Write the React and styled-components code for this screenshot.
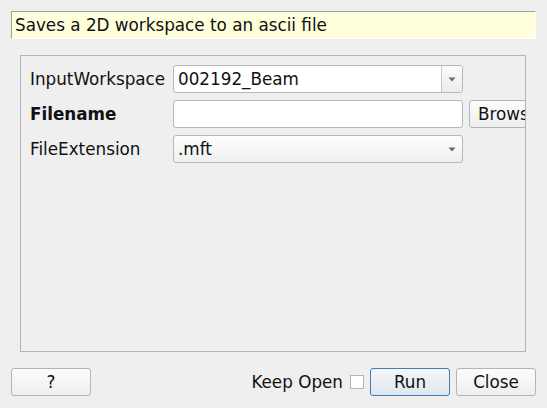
import React from 'react';
import styled, { createGlobalStyle } from 'styled-components';

const GlobalStyle = createGlobalStyle`
  html, body {
    margin: 0;
    padding: 0;
    background: #efefef;
  }
  body {
    font-family: "DejaVu Sans", "Liberation Sans", sans-serif;
    font-size: 16.8px;
    color: #111;
  }
`;

const Dialog = styled.div`
  width: 547px;
  height: 408px;
  box-sizing: border-box;
  padding: 11px 11px 0 11px;
  display: flex;
  flex-direction: column;
  background: #efefef;
`;

const Info = styled.div`
  height: 28px;
  box-sizing: border-box;
  background: #ffffdc;
  border-top: 1px solid #a0a0a0;
  border-left: 1px solid #a0a0a0;
  border-bottom: 1px solid #ffffff;
  border-right: 1px solid #ffffff;
  padding: 0 4px 0 3px;
  display: flex;
  align-items: center;
  white-space: nowrap;
`;

const Group = styled.div`
  margin: 16px 10px 0 9px;
  height: 297px;
  box-sizing: border-box;
  border: 1px solid #b4b4b4;
  padding: 9px 0 0 9px;
  overflow: hidden;
`;

const Form = styled.div`
  display: grid;
  grid-template-columns: 137px 290px 80px;
  column-gap: 6px;
  row-gap: 7px;
  align-items: center;
`;

const Label = styled.div`
  font-weight: ${({ $bold }) => ($bold ? 'bold' : 'normal')};
  white-space: nowrap;
`;

const Field = styled.div`
  height: 28px;
  box-sizing: border-box;
  border: 1px solid #b8b8b8;
  border-radius: 3px;
  background: ${({ $combo }) =>
    $combo ? 'linear-gradient(#fdfdfd, #f0f0f0)' : '#ffffff'};
  display: flex;
  align-items: center;
  padding-left: 4px;
  overflow: hidden;
`;

const FieldText = styled.span`
  flex: 1;
  white-space: nowrap;
`;

const Drop = styled.div`
  width: 20px;
  align-self: stretch;
  display: flex;
  align-items: center;
  justify-content: center;
  border-left: ${({ $sep }) => ($sep ? '1px solid #c8c8c8' : '1px solid transparent')};
  background: ${({ $sep }) => ($sep ? 'linear-gradient(#fbfbfb, #ececec)' : 'transparent')};
`;

const Button = styled.button`
  height: 28px;
  width: 80px;
  flex-shrink: 0;
  box-sizing: border-box;
  border: 1px solid ${({ $primary }) => ($primary ? '#3f7fb5' : '#b4b4b4')};
  border-radius: 3px;
  background: ${({ $primary }) =>
    $primary ? 'linear-gradient(#f4f7fa, #dfe6ed)' : 'linear-gradient(#fcfcfc, #eeeeee)'};
  font-family: "DejaVu Sans", "Liberation Sans", sans-serif;
  font-size: 16.8px;
  color: #111;
  padding: 0;
  text-align: ${({ $left }) => ($left ? 'left' : 'center')};
  padding-left: ${({ $left }) => ($left ? '8px' : '0')};
  white-space: nowrap;
  overflow: hidden;
`;

const Footer = styled.div`
  margin-top: 16px;
  display: flex;
  align-items: center;
  gap: 6px;
`;

const Spacer = styled.div`
  flex: 1;
`;

const KeepLabel = styled.span`
  margin-right: 1px;
  white-space: nowrap;
`;

const Check = styled.span`
  width: 14px;
  height: 14px;
  box-sizing: border-box;
  border: 1px solid #b4b4b4;
  background: #ffffff;
`;

const Arrow = () => (
  <svg width="8" height="5" viewBox="0 0 8 5">
    <path d="M0.5 0.5 L7.5 0.5 L4 4.5 Z" fill="#6a6a6a" />
  </svg>
);

export default function App() {
  return (
    <>
      <GlobalStyle />
      <Dialog>
        <Info>Saves a 2D workspace to an ascii file</Info>
        <Group>
          <Form>
            <Label>InputWorkspace</Label>
            <Field>
              <FieldText>002192_Beam</FieldText>
              <Drop $sep><Arrow /></Drop>
            </Field>
            <div />
            <Label $bold>Filename</Label>
            <Field />
            <Button $left>Browse...</Button>
            <Label>FileExtension</Label>
            <Field $combo>
              <FieldText>.mft</FieldText>
              <Drop><Arrow /></Drop>
            </Field>
            <div />
          </Form>
        </Group>
        <Footer>
          <Button>?</Button>
          <Spacer />
          <KeepLabel>Keep Open</KeepLabel>
          <Check />
          <Button $primary>Run</Button>
          <Button>Close</Button>
        </Footer>
      </Dialog>
    </>
  );
}
